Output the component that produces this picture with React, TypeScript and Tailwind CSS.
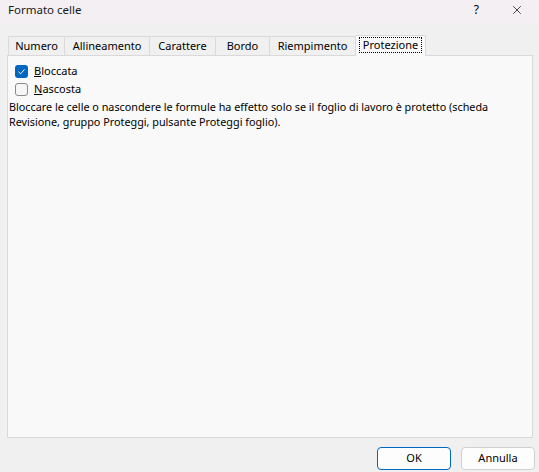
import { X } from "lucide-react"

const tabs = [
  { t: "Numero", w: "w-[57px]" },
  { t: "Allineamento", w: "w-[85px]" },
  { t: "Carattere", w: "w-[66px]" },
  { t: "Bordo", w: "w-[54px]" },
  { t: "Riempimento", w: "w-[86px]" },
]

export default function App() {
  return (
    <div className="w-[539px] h-[472px] flex flex-col bg-[#f0f0f0] text-[11px] text-black overflow-hidden" style={{ fontFamily: '"Noto Sans", "Open Sans", sans-serif' }}>
      {/* title bar */}
      <div className="h-[25px] flex items-center bg-[#f3eff3] pl-[8px] pb-[5px]">
        <span className="text-[11.5px] text-[#1a1a1a]">Formato celle</span>
        <span className="ml-auto mr-[31px] text-[12px]">?</span>
        <X className="w-[14px] h-[14px] mr-[15px]" strokeWidth={1.2} />
      </div>

      <div className="flex-1 flex flex-col pl-[7px] pr-[6px] pt-[9px]">
        {/* tabs */}
        <div className="flex items-end h-[21px] pl-[1px] relative z-10">
          {tabs.map((tab, i) => (
            <div key={tab.t} className={`${tab.w} h-[19px] flex items-center justify-center border-t border-r border-[#d9d9d9] bg-[#f0f0f0] ${i === 0 ? "border-l" : ""}`}>
              {tab.t}
            </div>
          ))}
          <div className="w-[70px] h-[21px] flex items-center justify-center border-t border-r border-[#d9d9d9] bg-[#f9f9f9] -mb-px pb-[2px]">
            <span className="border border-dotted border-black px-[3px] leading-[14px]">Protezione</span>
          </div>
        </div>

        {/* panel */}
        <div className="h-[383px] border border-[#d9d9d9] bg-[#f9f9f9] pl-[7px] pt-[6px]">
          <label className="flex items-center gap-[6px] h-[18px]">
            <span className="w-[13px] h-[13px] rounded-[3px] bg-[#0067c0] flex items-center justify-center">
              <svg viewBox="0 0 12 12" className="w-[9px] h-[9px]"><path d="M2 6.5 L4.8 9 L10 3.2" fill="none" stroke="white" strokeWidth="1.3" /></svg>
            </span>
            <span><u>B</u>loccata</span>
          </label>
          <label className="flex items-center gap-[6px] h-[18px]">
            <span className="w-[13px] h-[13px] rounded-[3px] border border-[#8a8a8a] bg-[#f6f6f6]" />
            <span><u>N</u>ascosta</span>
          </label>
          <p className="-ml-[7px] pl-[1px] mt-[1px] leading-[15px] whitespace-nowrap text-[10.8px]">
            Bloccare le celle o nascondere le formule ha effetto solo se il foglio di lavoro è protetto (scheda
            <br />
            Revisione, gruppo Proteggi, pulsante Proteggi foglio).
          </p>
        </div>

        {/* buttons */}
        <div className="flex justify-end gap-[10px] mt-[9px] -mr-[2px]">
          <button className="w-[74px] h-[23px] rounded-[4px] border-[1.5px] border-[#0067c0] bg-[#fdfdfd]">OK</button>
          <button className="w-[74px] h-[23px] rounded-[4px] border border-[#d0d0d0] bg-[#fdfdfd]">Annulla</button>
        </div>
      </div>
    </div>
  )
}
